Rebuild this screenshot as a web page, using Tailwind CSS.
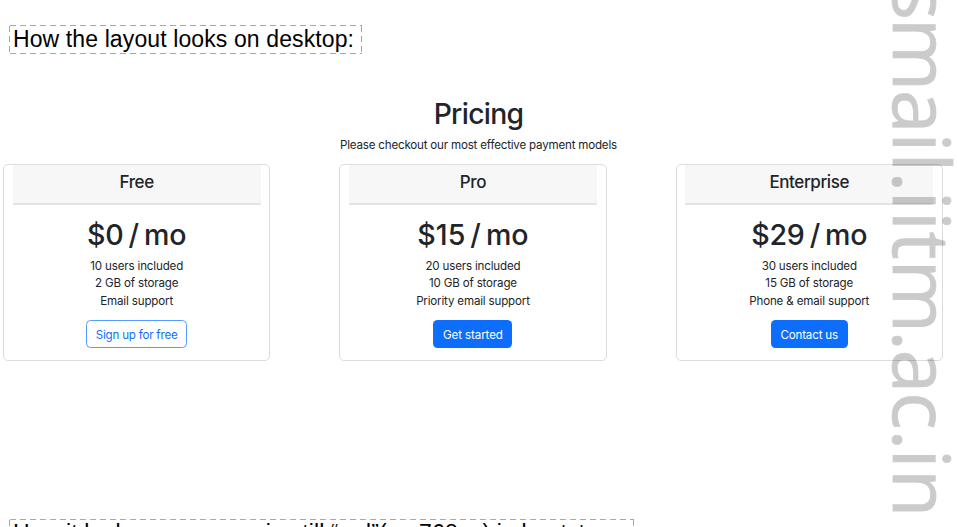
<!DOCTYPE html>
<html lang="en">
<head>
<meta charset="utf-8">
<title>Pricing</title>
<script src="https://cdn.jsdelivr.net/npm/@tailwindcss/browser@4"></script>
</head>
<body class="relative h-[527px] w-[957px] overflow-hidden bg-white font-[Inter,sans-serif] text-[#212529]">
<div class="flex h-[527px] flex-col overflow-hidden">
  <h2 class="relative mt-[25px] ml-[9px] h-[30px] w-[353px] shrink-0 font-['Liberation_Sans',sans-serif] text-[23px] leading-[29px] tracking-[0.11px] whitespace-nowrap text-black">
    <svg class="absolute inset-0" width="353" height="30" fill="none" stroke="#a3a6ae" stroke-dasharray="6 4"><path d="M1 .5H353M1 28.5H353M.5 1V30M352.5 1V30"/></svg>
    <span class="ml-[4px]">How the layout looks on desktop:</span>
  </h2>
  <main class="mt-[43px] h-[263px] shrink-0">
    <header class="text-center">
      <h1 class="h-[35px] text-[28.3px] leading-[32px] font-medium tracking-[-0.7px]">Pricing</h1>
      <p class="h-[31px] pt-[1px] text-[11.55px] leading-[23px] tracking-[-0.18px]">Please checkout our most effective payment models</p>
    </header>
    <div class="ml-[3px] flex gap-[69px] text-center">
      <section class="h-[197px] w-[267.3px] shrink-0 rounded-[5px] border border-[#dcdcdc] px-[8.5px]">
        <h4 class="h-[39.5px] border-b-2 border-[#e4e4e4] bg-[#f7f7f7] text-[17px] leading-[34px] font-medium tracking-[-0.35px]">Free</h4>
        <div class="pt-[13px]">
          <h2 class="h-[40px] text-[28.6px] leading-[34px] font-medium tracking-[-0.2px]">$0<span class="mx-[5px]">/</span>mo</h2>
          <ul class="text-[11.55px] leading-[17.5px] tracking-[-0.14px]"><li>10 users included</li><li>2 GB of storage</li><li>Email support</li></ul>
          <button class="mt-[10px] h-[28px] w-[101px] rounded-[4.5px] border border-[#559aff] pt-[3px] text-[11.55px] tracking-[-0.2px] text-[#0d6efd]">Sign up for free</button>
        </div>
      </section>
      <section class="h-[197px] w-[267.3px] shrink-0 rounded-[5px] border border-[#dcdcdc] px-[8.5px]">
        <h4 class="h-[39.5px] border-b-2 border-[#e4e4e4] bg-[#f7f7f7] text-[17px] leading-[34px] font-medium tracking-[-0.35px]">Pro</h4>
        <div class="pt-[13px]">
          <h2 class="h-[40px] text-[28.6px] leading-[34px] font-medium">$15<span class="mx-[5px]">/</span>mo</h2>
          <ul class="text-[11.55px] leading-[17.5px] tracking-[-0.16px]"><li>20 users included</li><li>10 GB of storage</li><li>Priority email support</li></ul>
          <button class="mt-[10px] h-[28px] w-[79px] rounded-[4.5px] bg-[#0d6efd] pt-[3px] text-[11.55px] tracking-[-0.1px] text-white">Get started</button>
        </div>
      </section>
      <section class="h-[197px] w-[267.3px] shrink-0 rounded-[5px] border border-[#dcdcdc] px-[8.5px]">
        <h4 class="h-[39.5px] border-b-2 border-[#e4e4e4] bg-[#f7f7f7] text-[17px] leading-[34px] font-medium tracking-[-0.4px]">Enterprise</h4>
        <div class="pt-[13px]">
          <h2 class="h-[40px] text-[28.6px] leading-[34px] font-medium tracking-[-0.2px]">$29<span class="mx-[5px]">/</span>mo</h2>
          <ul class="text-[11.55px] leading-[17.5px] tracking-[-0.15px]"><li>30 users included</li><li>15 GB of storage</li><li>Phone &amp; email support</li></ul>
          <button class="mt-[10px] h-[28px] w-[77px] rounded-[4.5px] bg-[#0d6efd] pt-[3px] text-[11.55px] tracking-[-0.15px] text-white">Contact us</button>
        </div>
      </section>
    </div>
  </main>
  <h2 class="relative mt-[158px] ml-[9px] h-[30px] w-[625px] shrink-0 font-['Liberation_Sans',sans-serif] text-[23px] leading-[29px] tracking-[0.15px] whitespace-nowrap text-black">
    <svg class="absolute inset-0" width="625" height="30" fill="none" stroke="#a3a6ae" stroke-dasharray="6 4"><path d="M1 .5H625M.5 1V30M624.5 1V30"/></svg>
    <span class="ml-[4px]">How it looks on screen size till “md”(em768px) in bootstrap:</span>
  </h2>
</div>
<svg class="pointer-events-none absolute inset-0" width="957" height="527">
  <text transform="translate(893.3 0) rotate(90)" y="0" x="-17.4 17.9 89.8 132.4 152.6 171.4 190.8 211.1 231.5 259.7 330.3 349.6 392 429.5 448.8 469" class="fill-black stroke-black stroke-[0.8px] font-['Open_Sans',sans-serif] text-[79px] opacity-20">smail.iitm.ac.in</text>
</svg>
</body>
</html>
